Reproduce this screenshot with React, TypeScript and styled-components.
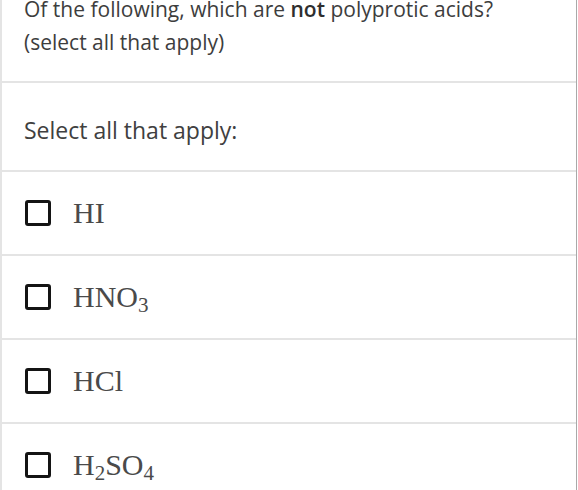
import React from "react";
import styled, { createGlobalStyle } from "styled-components";

const GlobalStyle = createGlobalStyle`
  html, body {
    margin: 0;
    padding: 0;
    background: #ffffff;
    overflow: hidden;
  }
  body {
    font-family: "Open Sans", "Liberation Sans", sans-serif;
  }
`;

const Card = styled.div`
  width: 577px;
  box-sizing: border-box;
  margin-top: -7px;
  border-left: 2px solid #e4e4e4;
  border-right: 1px solid #a9a9a9;
  background: #ffffff;
`;

const Section = styled.div<{ $h: number; $pt: number }>`
  box-sizing: border-box;
  height: ${(p) => p.$h}px;
  padding: ${(p) => p.$pt}px 22px 0 22px;
  border-bottom: 2px solid #e4e4e4;
`;

const Question = styled.p`
  margin: 0;
  font-size: 21px;
  line-height: 33px;
  color: #3d3d3d;
`;

const Strong = styled.span`
  font-weight: 600;
  color: #2e2e2e;
`;

const Prompt = styled.p`
  margin: 0;
  font-size: 23px;
  line-height: 30px;
  color: #404040;
`;

const OptionRow = styled.label`
  box-sizing: border-box;
  height: 84px;
  display: flex;
  align-items: center;
  gap: 22px;
  padding-left: 23px;
  border-bottom: 2px solid #e4e4e4;
  cursor: pointer;
`;

const Box = styled.span`
  box-sizing: border-box;
  width: 26px;
  height: 26px;
  border: 3px solid #141414;
  border-radius: 3px;
  background: #ffffff;
  flex: none;
`;

const Formula = styled.span`
  font-family: "Liberation Serif", "DejaVu Serif", serif;
  font-size: 30px;
  line-height: 1;
  color: #4a4a4a;
`;

const Sub = styled.sub`
  font-size: 21px;
  vertical-align: -5px;
  line-height: 0;
`;

type Part = { t: string; sub?: boolean };

const options: Part[][] = [
  [{ t: "HI" }],
  [{ t: "HNO" }, { t: "3", sub: true }],
  [{ t: "HCl" }],
  [{ t: "H" }, { t: "2", sub: true }, { t: "SO" }, { t: "4", sub: true }],
];

export default function App() {
  return (
    <>
      <GlobalStyle />
      <Card>
        <Section $h={90} $pt={0}>
          <Question>
            Of the following, which are <Strong>not</Strong> polyprotic acids?
            <br />
            (select all that apply)
          </Question>
        </Section>
        <Section $h={89} $pt={32}>
          <Prompt>Select all that apply:</Prompt>
        </Section>
        {options.map((parts, i) => (
          <OptionRow key={i}>
            <Box />
            <Formula>
              {parts.map((p, j) =>
                p.sub ? <Sub key={j}>{p.t}</Sub> : <React.Fragment key={j}>{p.t}</React.Fragment>
              )}
            </Formula>
          </OptionRow>
        ))}
      </Card>
    </>
  );
}
